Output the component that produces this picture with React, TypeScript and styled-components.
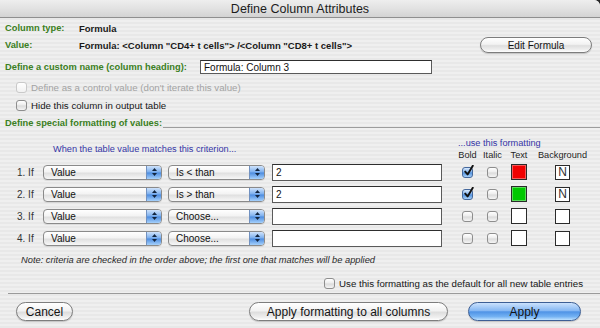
import styled, { createGlobalStyle } from "styled-components";

const GlobalStyle = createGlobalStyle`
  html, body {
    margin: 0;
    padding: 0;
    background: #262626;
  }
  body {
    font-family: "Liberation Sans", Arial, sans-serif;
  }
`;

const Window = styled.div`
  width: 600px;
  height: 328px;
  overflow: hidden;
  display: flex;
  flex-direction: column;
  border-top-right-radius: 6px;
  background: repeating-linear-gradient(
    to bottom,
    #efefef 0,
    #efefef 2px,
    #e8e8e8 2px,
    #e8e8e8 4px
  );
`;

const TitleBar = styled.div`
  box-sizing: border-box;
  height: 18px;
  flex: none;
  display: flex;
  align-items: center;
  justify-content: center;
  font-size: 12.5px;
  color: #1c1c1c;
  border-bottom: 1px solid #8f8f8f;
  background: linear-gradient(#eeeeee, #e2e2e2 50%, #d3d3d3);
`;

const InfoRow = styled.div<{ $h: number; $mt?: number }>`
  display: flex;
  align-items: center;
  height: ${(p) => p.$h}px;
  margin-top: ${(p) => p.$mt ?? 0}px;
  padding: 0 8px 0 5px;
  flex: none;
`;

const FieldLabel = styled.span<{ $w?: number }>`
  width: ${(p) => (p.$w ? `${p.$w}px` : "auto")};
  flex: none;
  color: #3b7f22;
  font-weight: bold;
  font-size: 9.3px;
  white-space: nowrap;
`;

const FieldValue = styled.span`
  flex: 1;
  color: #1a1a1a;
  font-weight: bold;
  font-size: 9.5px;
  white-space: nowrap;
`;

const TextField = styled.div<{ $w: number; $h: number }>`
  box-sizing: border-box;
  width: ${(p) => p.$w}px;
  height: ${(p) => p.$h}px;
  flex: none;
  display: flex;
  align-items: center;
  padding-left: 3px;
  background: #ffffff;
  border: 1px solid #5a5a5a;
  border-top-color: #2e2e2e;
  font-size: 10px;
  color: #111;
`;

const Pill = styled.button<{ $w: number; $h: number; $fs: number; $primary?: boolean }>`
  box-sizing: border-box;
  width: ${(p) => p.$w}px;
  height: ${(p) => p.$h}px;
  flex: none;
  padding: 0;
  border-radius: ${(p) => p.$h / 2}px;
  border: 1px solid ${(p) => (p.$primary ? "#3d5f95" : "#7d7d7d")};
  font-family: "Liberation Sans", Arial, sans-serif;
  font-size: ${(p) => p.$fs}px;
  color: #141414;
  background: ${(p) =>
    p.$primary
      ? "linear-gradient(#cbe2fd, #86b8f3 45%, #4f93e6 52%, #74b2f3 80%, #bfe2ff)"
      : "linear-gradient(#ffffff, #f2f2f2 45%, #dedede 55%, #f0f0f0 85%, #ffffff)"};
  box-shadow: 0 1px 1px rgba(0, 0, 0, 0.18);
`;

const CheckRow = styled.label<{ $mt?: number; $end?: boolean }>`
  display: flex;
  align-items: center;
  gap: 4px;
  height: 18px;
  margin-top: ${(p) => p.$mt ?? 0}px;
  padding: ${(p) => (p.$end ? "0 17px 0 0" : "0 0 0 16px")};
  justify-content: ${(p) => (p.$end ? "flex-end" : "flex-start")};
  flex: none;
`;

const CheckText = styled.span<{ $disabled?: boolean }>`
  font-size: 9.7px;
  color: ${(p) => (p.$disabled ? "#a3a3a3" : "#161616")};
  white-space: nowrap;
`;

const Box = styled.span<{ $checked?: boolean; $disabled?: boolean }>`
  box-sizing: border-box;
  position: relative;
  display: inline-block;
  width: 11px;
  height: 11px;
  flex: none;
  border-radius: 3px;
  border: 1px solid
    ${(p) => (p.$disabled ? "#c9c9c9" : p.$checked ? "#45689c" : "#8e8e8e")};
  background: ${(p) =>
    p.$checked
      ? "linear-gradient(#d6e8fd, #7fb0ec 48%, #4f8fdc 52%, #a9d2fb)"
      : p.$disabled
      ? "linear-gradient(#ffffff, #f1f1f1)"
      : "linear-gradient(#ffffff, #ececec 48%, #dadada 52%, #f5f5f5)"};
`;

const Tick = styled.svg`
  position: absolute;
  left: 0;
  top: -3px;
  width: 11px;
  height: 12px;
`;

const SectionRow = styled.div`
  display: flex;
  align-items: flex-start;
  height: 17px;
  margin-top: 1px;
  padding-left: 5px;
  flex: none;
`;

const SectionTitle = styled(FieldLabel)`
  line-height: 17px;
`;

const SectionLine = styled.div`
  flex: 1;
  height: 12px;
  margin-left: 1px;
  border-bottom: 1px solid #9c9c9c;
`;

const COLS = "26px 125px 104px 183px 25px 25px 28px 59px";

const FormatHeader = styled.div`
  display: grid;
  grid-template-columns: ${COLS};
  grid-template-rows: 13px 12px;
  margin-top: 4px;
  padding-left: 17px;
  flex: none;
`;

const CriterionCaption = styled.div`
  grid-column: 2 / 5;
  grid-row: 1 / 3;
  align-self: center;
  padding-left: 10px;
  font-size: 9.2px;
  color: #3535a6;
  white-space: nowrap;
`;

const FormatCaption = styled.div`
  grid-column: 5 / 9;
  grid-row: 1;
  align-self: center;
  padding-left: 3px;
  font-size: 9.2px;
  color: #3535a6;
  white-space: nowrap;
`;

const ColHead = styled.div<{ $col: number }>`
  grid-column: ${(p) => p.$col};
  grid-row: 2;
  justify-self: center;
  align-self: center;
  font-size: 9.2px;
  color: #1e1e1e;
  white-space: nowrap;
`;

const CriteriaGrid = styled.div`
  display: grid;
  grid-template-columns: ${COLS};
  grid-auto-rows: 22px;
  align-items: center;
  padding-left: 17px;
  flex: none;
`;

const RowNum = styled.span`
  font-size: 10px;
  color: #333;
  white-space: nowrap;
`;

const Popup = styled.div<{ $w: number }>`
  box-sizing: border-box;
  width: ${(p) => p.$w}px;
  height: 15px;
  display: flex;
  align-items: stretch;
  border: 1px solid #8a8a8a;
  border-radius: 4px;
  overflow: hidden;
  background: linear-gradient(#ffffff, #f3f3f3 45%, #e0e0e0 55%, #f7f7f7);
  box-shadow: 0 1px 0 rgba(0, 0, 0, 0.08);
`;

const PopupText = styled.span`
  flex: 1;
  display: flex;
  align-items: center;
  padding-left: 7px;
  font-size: 10px;
  color: #111;
  white-space: nowrap;
`;

const PopupCap = styled.span`
  width: 14px;
  display: flex;
  align-items: center;
  justify-content: center;
  border-left: 1px solid #7191c0;
  background: linear-gradient(#cfe3fc, #79aded 48%, #4b8bdf 52%, #a6d1fc);
`;

const Centered = styled.div`
  justify-self: center;
  display: flex;
`;

const Swatch = styled.span<{ $color: string }>`
  box-sizing: border-box;
  width: 16px;
  height: 16px;
  border: 1px solid #2a2a2a;
  background: ${(p) => p.$color};
  box-shadow: inset 0 0 0 1px rgba(255, 255, 255, 0.35);
`;

const BgBox = styled.span`
  box-sizing: border-box;
  width: 15px;
  height: 15px;
  border: 1px solid #2a2a2a;
  background: #ffffff;
  display: flex;
  align-items: center;
  justify-content: center;
  font-size: 12px;
  line-height: 1;
  color: #2e2e2e;
  font-family: "Liberation Sans", Arial, sans-serif;
`;

const Note = styled.div`
  height: 18px;
  margin-top: 2px;
  padding-left: 21px;
  display: flex;
  align-items: center;
  font-size: 9.3px;
  font-style: italic;
  color: #2a2a2a;
  white-space: nowrap;
  flex: none;
`;

const Separator = styled.div`
  height: 0;
  margin: 1px 0 0 8px;
  border-top: 1px solid #9a9a9a;
  flex: none;
`;

const ButtonBar = styled.div`
  display: flex;
  align-items: flex-start;
  padding: 8px 19px 0 16px;
  flex: 1;
`;

const RightButtons = styled.div`
  margin-left: auto;
  display: flex;
  gap: 20px;
`;

const Checkbox = ({ checked, disabled }: { checked?: boolean; disabled?: boolean }) => (
  <Box $checked={checked} $disabled={disabled}>
    {checked && (
      <Tick viewBox="0 0 11 12">
        <path d="M2.2 6.6 L4.6 9.4 L9.8 0.8" fill="none" stroke="#111" strokeWidth="1.9" strokeLinecap="round" strokeLinejoin="round" />
      </Tick>
    )}
  </Box>
);

const Arrows = () => (
  <svg width="7" height="10" viewBox="0 0 7 10">
    <path d="M3.5 1 L6 4 L1 4 Z" fill="#12253f" />
    <path d="M1 6 L6 6 L3.5 9 Z" fill="#12253f" />
  </svg>
);

const Select = ({ w, label }: { w: number; label: string }) => (
  <Popup $w={w}>
    <PopupText>{label}</PopupText>
    <PopupCap>
      <Arrows />
    </PopupCap>
  </Popup>
);

type Criterion = {
  op: string;
  value: string;
  bold: boolean;
  color?: string;
  bg: boolean;
};

const criteria: Criterion[] = [
  { op: "Is < than", value: "2", bold: true, color: "#f00000", bg: true },
  { op: "Is > than", value: "2", bold: true, color: "#00c800", bg: true },
  { op: "Choose...", value: "", bold: false, bg: false },
  { op: "Choose...", value: "", bold: false, bg: false },
];

export default function App() {
  return (
    <>
      <GlobalStyle />
      <Window>
        <TitleBar>Define Column Attributes</TitleBar>

        <InfoRow $h={16} $mt={2}>
          <FieldLabel $w={74}>Column type:</FieldLabel>
          <FieldValue>Formula</FieldValue>
        </InfoRow>
        <InfoRow $h={18}>
          <FieldLabel $w={74}>Value:</FieldLabel>
          <FieldValue>Formula: &lt;Column "CD4+ t cells"&gt; /&lt;Column "CD8+ t cells"&gt;</FieldValue>
          <Pill $w={112} $h={16} $fs={10}>Edit Formula</Pill>
        </InfoRow>
        <InfoRow $h={18} $mt={4}>
          <FieldLabel $w={195}>Define a custom name (column heading):</FieldLabel>
          <TextField $w={232} $h={14}>Formula: Column 3</TextField>
        </InfoRow>

        <CheckRow $mt={2}>
          <Checkbox disabled />
          <CheckText $disabled>Define as a control value (don't iterate this value)</CheckText>
        </CheckRow>
        <CheckRow>
          <Checkbox />
          <CheckText>Hide this column in output table</CheckText>
        </CheckRow>

        <SectionRow>
          <SectionTitle>Define special formatting of values:</SectionTitle>
          <SectionLine />
        </SectionRow>

        <FormatHeader>
          <CriterionCaption>When the table value matches this criterion...</CriterionCaption>
          <FormatCaption>...use this formatting</FormatCaption>
          <ColHead $col={5}>Bold</ColHead>
          <ColHead $col={6}>Italic</ColHead>
          <ColHead $col={7}>Text</ColHead>
          <ColHead $col={8}>Background</ColHead>
        </FormatHeader>

        <CriteriaGrid>
          {criteria.map((c, i) => (
            <Row key={i} index={i} c={c} />
          ))}
        </CriteriaGrid>

        <Note>Note: criteria are checked in the order above; the first one that matches will be applied</Note>

        <CheckRow $mt={5} $end>
          <Checkbox />
          <CheckText>Use this formatting as the default for all new table entries</CheckText>
        </CheckRow>

        <Separator />

        <ButtonBar>
          <Pill $w={57} $h={19} $fs={12}>Cancel</Pill>
          <RightButtons>
            <Pill $w={199} $h={19} $fs={12}>Apply formatting to all columns</Pill>
            <Pill $w={113} $h={19} $fs={12} $primary>Apply</Pill>
          </RightButtons>
        </ButtonBar>
      </Window>
    </>
  );
}

function Row({ index, c }: { index: number; c: Criterion }) {
  return (
    <>
      <RowNum>{index + 1}. If</RowNum>
      <Select w={119} label="Value" />
      <Select w={97} label={c.op} />
      <TextField $w={170} $h={17}>{c.value}</TextField>
      <Centered>
        <Checkbox checked={c.bold} />
      </Centered>
      <Centered>
        <Checkbox />
      </Centered>
      <Centered>
        <Swatch $color={c.color ?? "#ffffff"} />
      </Centered>
      <Centered>
        <BgBox>{c.bg ? "N" : ""}</BgBox>
      </Centered>
    </>
  );
}
